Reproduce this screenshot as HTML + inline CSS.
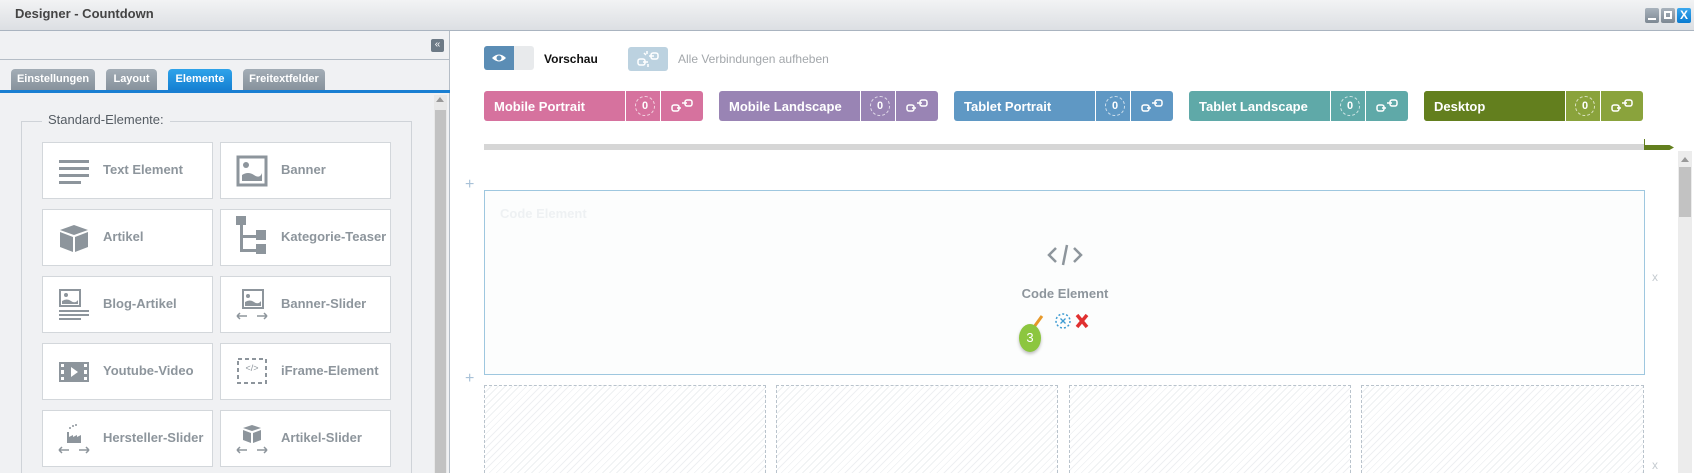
<!DOCTYPE html>
<html style="width:1694px;height:473px;overflow:hidden"><head><meta charset="utf-8"><style>
*{margin:0;padding:0;box-sizing:border-box}
body{width:1694px;height:473px;overflow:hidden;background:#fff;font-family:"Liberation Sans",sans-serif;position:relative}
.a{position:absolute}
.title{left:0;top:0;width:1694px;height:31px;background:linear-gradient(#f2f3f4,#dcdfe3);border-bottom:1px solid #aab4c0}
.title span{position:absolute;left:15px;top:6px;font-size:13px;font-weight:bold;color:#444}
.wb{top:8px;width:14px;height:15px;border-radius:2px;background:linear-gradient(#a8b2bc,#7d8893)}
.left{left:0;top:31px;width:450px;height:442px;background:#f0f1f3;border-right:1px solid #b5bdc6}
.tab{top:69px;height:21px;border-radius:4px 4px 0 0;background:linear-gradient(#a3adb6,#87929c);color:#fff;font-size:11px;font-weight:bold;text-align:center;line-height:21px}
.box{width:171px;height:57px;background:#fff;border:1px solid #d3d7db}
.box b{position:absolute;left:60px;top:19px;font-size:13px;color:#8d959c}
.box svg{position:absolute;left:15px;top:12px}
.dev{top:91px;height:30px;border-radius:3px;color:#fff;font-size:13px;font-weight:bold;width:219px}
.dev span{position:absolute;left:10px;top:8px}
.dev i{position:absolute;top:0;width:1px;height:30px;background:#fff}
.dev .z{position:absolute;top:5px;width:20px;height:20px;border:1px dashed rgba(255,255,255,.7);border-radius:50%;font-style:normal;font-size:11px;text-align:center;line-height:18px}
.ph{top:385px;height:88px;border:1px dashed #b9c3cc;border-bottom:0;background:repeating-linear-gradient(135deg,#fff 0 4px,#eef0f2 4px 5px)}
</style></head><body>
<div class="a title"><span>Designer - Countdown</span></div>
<div class="a wb" style="left:1645px"><div style="position:absolute;left:3px;bottom:3px;width:8px;height:2px;background:#fff"></div></div>
<div class="a wb" style="left:1661px"><div style="position:absolute;left:3px;top:3px;width:8px;height:8px;border:2px solid #fff"></div></div>
<div class="a wb" style="left:1677px;background:linear-gradient(#3aa7ee,#0a7bd0);color:#fff;font-size:12px;font-weight:bold;text-align:center;line-height:15px">X</div>

<div class="a left"></div>
<div class="a" style="left:0;top:59px;width:450px;height:1px;background:#b5bdc6"></div>
<div class="a" style="left:431px;top:39px;width:13px;height:13px;background:#6d7a86;border-radius:2px;color:#fff;font-size:10px;line-height:12px;text-align:center">«</div>
<div class="a tab" style="left:11px;width:84px">Einstellungen</div>
<div class="a tab" style="left:106px;width:51px">Layout</div>
<div class="a tab" style="left:168px;width:64px;background:linear-gradient(#2fa3ea,#1580d2)">Elemente</div>
<div class="a tab" style="left:243px;width:82px">Freitextfelder</div>
<div class="a" style="left:0;top:90px;width:450px;height:3px;background:#1a7fd2"></div>
<div class="a" style="left:21px;top:121px;width:391px;height:352px;border:1px solid #cfd3d8;border-bottom:0"></div>
<div class="a" style="left:42px;top:112px;padding:0 6px;background:#f0f1f3;font-size:13px;color:#555c63">Standard-Elemente:</div>
<div class="a" style="left:434px;top:95px;width:13px;height:378px;background:#e8e8e8"></div>
<div class="a" style="left:436px;top:97px;width:0;height:0;border:4px solid transparent;border-bottom:5px solid #999;border-top:0"></div>
<div class="a" style="left:435px;top:110px;width:11px;height:363px;background:#c2c2c2"></div>

<div class="a box" style="left:42px;top:142px"><svg width="32" height="32" viewBox="0 0 32 32" fill="#8d959c"><rect x="1" y="5" width="30" height="3"/><rect x="1" y="12" width="30" height="3"/><rect x="1" y="19" width="30" height="3"/><rect x="1" y="26" width="22" height="3"/></svg><b>Text Element</b></div>
<div class="a box" style="left:220px;top:142px"><svg width="32" height="32" viewBox="0 0 32 32"><rect x="2" y="2" width="28" height="28" fill="none" stroke="#8d959c" stroke-width="3"/><circle cx="10" cy="10" r="3" fill="#8d959c"/><path d="M6 26V20Q12 16 18 20T26 18V26Z" fill="#8d959c"/></svg><b>Banner</b></div>
<div class="a box" style="left:42px;top:209px"><svg width="32" height="32" viewBox="0 0 32 32" fill="#8d959c"><path d="M2 8L16 3L30 8L16 13Z"/><path d="M2 10L15 15V30L2 25Z"/><path d="M30 10L17 15V30L30 25Z"/></svg><b>Artikel</b></div>
<div class="a box" style="left:220px;top:209px"><svg width="32" height="40" viewBox="0 0 32 40" fill="#8d959c" style="top:6px"><rect x="0" y="0" width="10" height="9"/><rect x="4" y="9" width="3" height="27"/><rect x="4" y="19" width="20" height="3"/><rect x="4" y="33" width="20" height="3"/><rect x="20" y="14" width="10" height="10"/><rect x="20" y="28" width="10" height="10"/></svg><b>Kategorie-Teaser</b></div>
<div class="a box" style="left:42px;top:276px"><svg width="32" height="32" viewBox="0 0 32 32" fill="#8d959c"><rect x="2" y="1" width="20" height="16" fill="none" stroke="#8d959c" stroke-width="2"/><circle cx="8" cy="6" r="2"/><path d="M4 15V12Q9 9 13 12T20 11V15Z"/><rect x="1" y="21" width="30" height="2"/><rect x="1" y="25" width="30" height="2"/><rect x="1" y="29" width="22" height="2"/></svg><b>Blog-Artikel</b></div>
<div class="a box" style="left:220px;top:276px"><svg width="32" height="32" viewBox="0 0 32 32" fill="#8d959c"><rect x="7" y="1" width="20" height="18" fill="none" stroke="#8d959c" stroke-width="2"/><circle cx="12" cy="7" r="2"/><path d="M9 17V13Q14 10 18 13T25 12V17Z"/><path d="M1 27H11M1 27L4 24M1 27L4 30M21 27H31M31 27L28 24M31 27L28 30" stroke="#8d959c" stroke-width="1.5" fill="none"/></svg><b>Banner-Slider</b></div>
<div class="a box" style="left:42px;top:343px"><svg width="32" height="32" viewBox="0 0 32 32" fill="#8d959c"><path d="M1 6H31V26H1Z M3 8V11H6V8Z M3 14V18H6V14Z M3 21V24H6V21Z M26 8V11H29V8Z M26 14V18H29V14Z M26 21V24H29V21Z M13 11V21L20 16Z" fill-rule="evenodd"/></svg><b>Youtube-Video</b></div>
<div class="a box" style="left:220px;top:343px"><svg width="32" height="32" viewBox="0 0 32 32"><rect x="2" y="3" width="28" height="24" fill="none" stroke="#8d959c" stroke-width="2" stroke-dasharray="4 3"/><text x="16" y="15" font-size="9" fill="#8d959c" text-anchor="middle" font-family="Liberation Sans">&lt;/&gt;</text></svg><b>iFrame-Element</b></div>
<div class="a box" style="left:42px;top:410px"><svg width="32" height="32" viewBox="0 0 32 32" fill="#8d959c"><path d="M9 20V9H11V14L15 12V14L19 12V14L23 12V20Z"/><circle cx="12" cy="5" r="1"/><circle cx="15" cy="3" r="1"/><circle cx="18" cy="2" r="1"/><path d="M1 27H11M1 27L4 24M1 27L4 30M21 27H31M31 27L28 24M31 27L28 30" stroke="#8d959c" stroke-width="1.5" fill="none"/></svg><b>Hersteller-Slider</b></div>
<div class="a box" style="left:220px;top:410px"><svg width="32" height="32" viewBox="0 0 32 32" fill="#8d959c"><path d="M7 5L16 2L25 5L16 8Z"/><path d="M7 7L15 10V20L7 17Z"/><path d="M25 7L17 10V20L25 17Z"/><path d="M1 27H11M1 27L4 24M1 27L4 30M21 27H31M31 27L28 24M31 27L28 30" stroke="#8d959c" stroke-width="1.5" fill="none"/></svg><b>Artikel-Slider</b></div>

<div class="a" style="left:484px;top:46px;width:50px;height:24px;border-radius:3px;background:#e8eaec"></div>
<div class="a" style="left:484px;top:46px;width:30px;height:24px;border-radius:3px 0 0 3px;background:#5b8db5"><svg width="30" height="24" viewBox="0 0 30 24"><path d="M8 12Q15 5 22 12Q15 19 8 12Z" fill="#fff"/><circle cx="15" cy="12" r="2.5" fill="#5b8db5"/></svg></div>
<div class="a" style="left:544px;top:52px;font-size:12px;font-weight:bold;color:#111">Vorschau</div>
<div class="a" style="left:628px;top:47px;width:40px;height:24px;border-radius:3px;background:#bcd2e0"><svg width="40" height="24" viewBox="0 0 40 24" fill="none" stroke="#fff" stroke-width="1.5"><rect x="10" y="12" width="7" height="6" rx="2"/><rect x="23" y="6" width="7" height="6" rx="2"/><path d="M15 15H20M21 9H26M19 4V7M16 6L18 8M20 17V20"/></svg></div>
<div class="a" style="left:678px;top:52px;font-size:12px;color:#a3a7ab">Alle Verbindungen aufheben</div>

<div class="a dev" style="left:484px;background:#d6729e"><span>Mobile Portrait</span><i style="left:141px"></i><em class="z" style="left:151px">0</em><i style="left:176px"></i><svg class="a" style="left:186px;top:7px" width="26" height="16" viewBox="0 0 26 16" fill="none" stroke="#fff" stroke-width="1.5"><rect x="2" y="7" width="7" height="6" rx="2"/><path d="M7 10H11"/><rect x="15" y="2" width="7" height="6" rx="2"/><path d="M12 5H17"/></svg></div>
<div class="a dev" style="left:719px;background:#9984b4"><span>Mobile Landscape</span><i style="left:141px"></i><em class="z" style="left:151px">0</em><i style="left:176px"></i><svg class="a" style="left:186px;top:7px" width="26" height="16" viewBox="0 0 26 16" fill="none" stroke="#fff" stroke-width="1.5"><rect x="2" y="7" width="7" height="6" rx="2"/><path d="M7 10H11"/><rect x="15" y="2" width="7" height="6" rx="2"/><path d="M12 5H17"/></svg></div>
<div class="a dev" style="left:954px;background:#5f98c4"><span>Tablet Portrait</span><i style="left:141px"></i><em class="z" style="left:151px">0</em><i style="left:176px"></i><svg class="a" style="left:186px;top:7px" width="26" height="16" viewBox="0 0 26 16" fill="none" stroke="#fff" stroke-width="1.5"><rect x="2" y="7" width="7" height="6" rx="2"/><path d="M7 10H11"/><rect x="15" y="2" width="7" height="6" rx="2"/><path d="M12 5H17"/></svg></div>
<div class="a dev" style="left:1189px;background:#5fa9a8"><span>Tablet Landscape</span><i style="left:141px"></i><em class="z" style="left:151px">0</em><i style="left:176px"></i><svg class="a" style="left:186px;top:7px" width="26" height="16" viewBox="0 0 26 16" fill="none" stroke="#fff" stroke-width="1.5"><rect x="2" y="7" width="7" height="6" rx="2"/><path d="M7 10H11"/><rect x="15" y="2" width="7" height="6" rx="2"/><path d="M12 5H17"/></svg></div>
<div class="a dev" style="left:1424px;background:#8aa33c"><div class="a" style="left:0;top:0;width:141px;height:30px;background:#637f1e;border-radius:3px 0 0 3px"></div><span>Desktop</span><i style="left:141px"></i><em class="z" style="left:151px">0</em><i style="left:176px"></i><svg class="a" style="left:186px;top:7px" width="26" height="16" viewBox="0 0 26 16" fill="none" stroke="#fff" stroke-width="1.5"><rect x="2" y="7" width="7" height="6" rx="2"/><path d="M7 10H11"/><rect x="15" y="2" width="7" height="6" rx="2"/><path d="M12 5H17"/></svg></div>

<div class="a" style="left:484px;top:144px;width:1160px;height:6px;background:#d6d6d6"></div>
<div class="a" style="left:1644px;top:145px;width:30px;height:5px;background:#637f1e;clip-path:polygon(0 0,85% 0,100% 50%,85% 100%,0 100%)"></div>
<div class="a" style="left:1644px;top:139px;width:1px;height:7px;background:#637f1e"></div>

<div class="a" style="left:1678px;top:151px;width:14px;height:322px;background:#ececec"></div>
<div class="a" style="left:1681px;top:157px;border:4px solid transparent;border-bottom:5px solid #999;border-top:0"></div>
<div class="a" style="left:1679px;top:167px;width:12px;height:50px;background:#c2c2c2"></div>

<div class="a" style="left:465px;top:176px;color:#a9c2d8;font-size:16px">+</div>
<div class="a" style="left:465px;top:370px;color:#a9c2d8;font-size:16px">+</div>
<div class="a" style="left:484px;top:190px;width:1161px;height:185px;border:1px solid #9ec7df;background:#fcfdfd"></div>
<div class="a" style="left:500px;top:206px;font-size:13px;font-weight:bold;color:#eef1f3">Code Element</div>
<svg class="a" style="left:1046px;top:243px" width="38" height="24" viewBox="0 0 38 24" fill="none" stroke="#8d959c" stroke-width="2.5"><path d="M10 5L3 12L10 19M28 5L35 12L28 19M21 2L17 22"/></svg>
<div class="a" style="left:0;width:2130px;top:286px;font-size:13px;font-weight:bold;color:#8d959c;text-align:center">Code Element</div>
<svg class="a" style="left:1032px;top:311px" width="60" height="22" viewBox="0 0 60 22"><path d="M2 16L10 5" stroke="#e7992a" stroke-width="3"/><circle cx="31" cy="10" r="7" fill="none" stroke="#3d9bd2" stroke-width="1.5" stroke-dasharray="2 2"/><path d="M28.5 7.5L33.5 12.5M33.5 7.5L28.5 12.5" stroke="#3d9bd2" stroke-width="1.3"/><path d="M45 4L55 16M55 4L45 16" stroke="#e03030" stroke-width="3.5"/></svg>
<div class="a" style="left:1019px;top:324px;width:22px;height:28px;border-radius:50%;background:#8cc63f;box-shadow:0 2px 3px rgba(0,0,0,.25);color:#fff;font-size:13px;text-align:center;line-height:28px">3</div>
<div class="a" style="left:1652px;top:270px;font-size:12px;color:#c5cbd0">x</div>
<div class="a" style="left:1652px;top:458px;font-size:12px;color:#c5cbd0">x</div>

<div class="a ph" style="left:484px;width:282px"></div>
<div class="a ph" style="left:776px;width:282px"></div>
<div class="a ph" style="left:1069px;width:282px"></div>
<div class="a ph" style="left:1361px;width:283px"></div>
</body></html>
